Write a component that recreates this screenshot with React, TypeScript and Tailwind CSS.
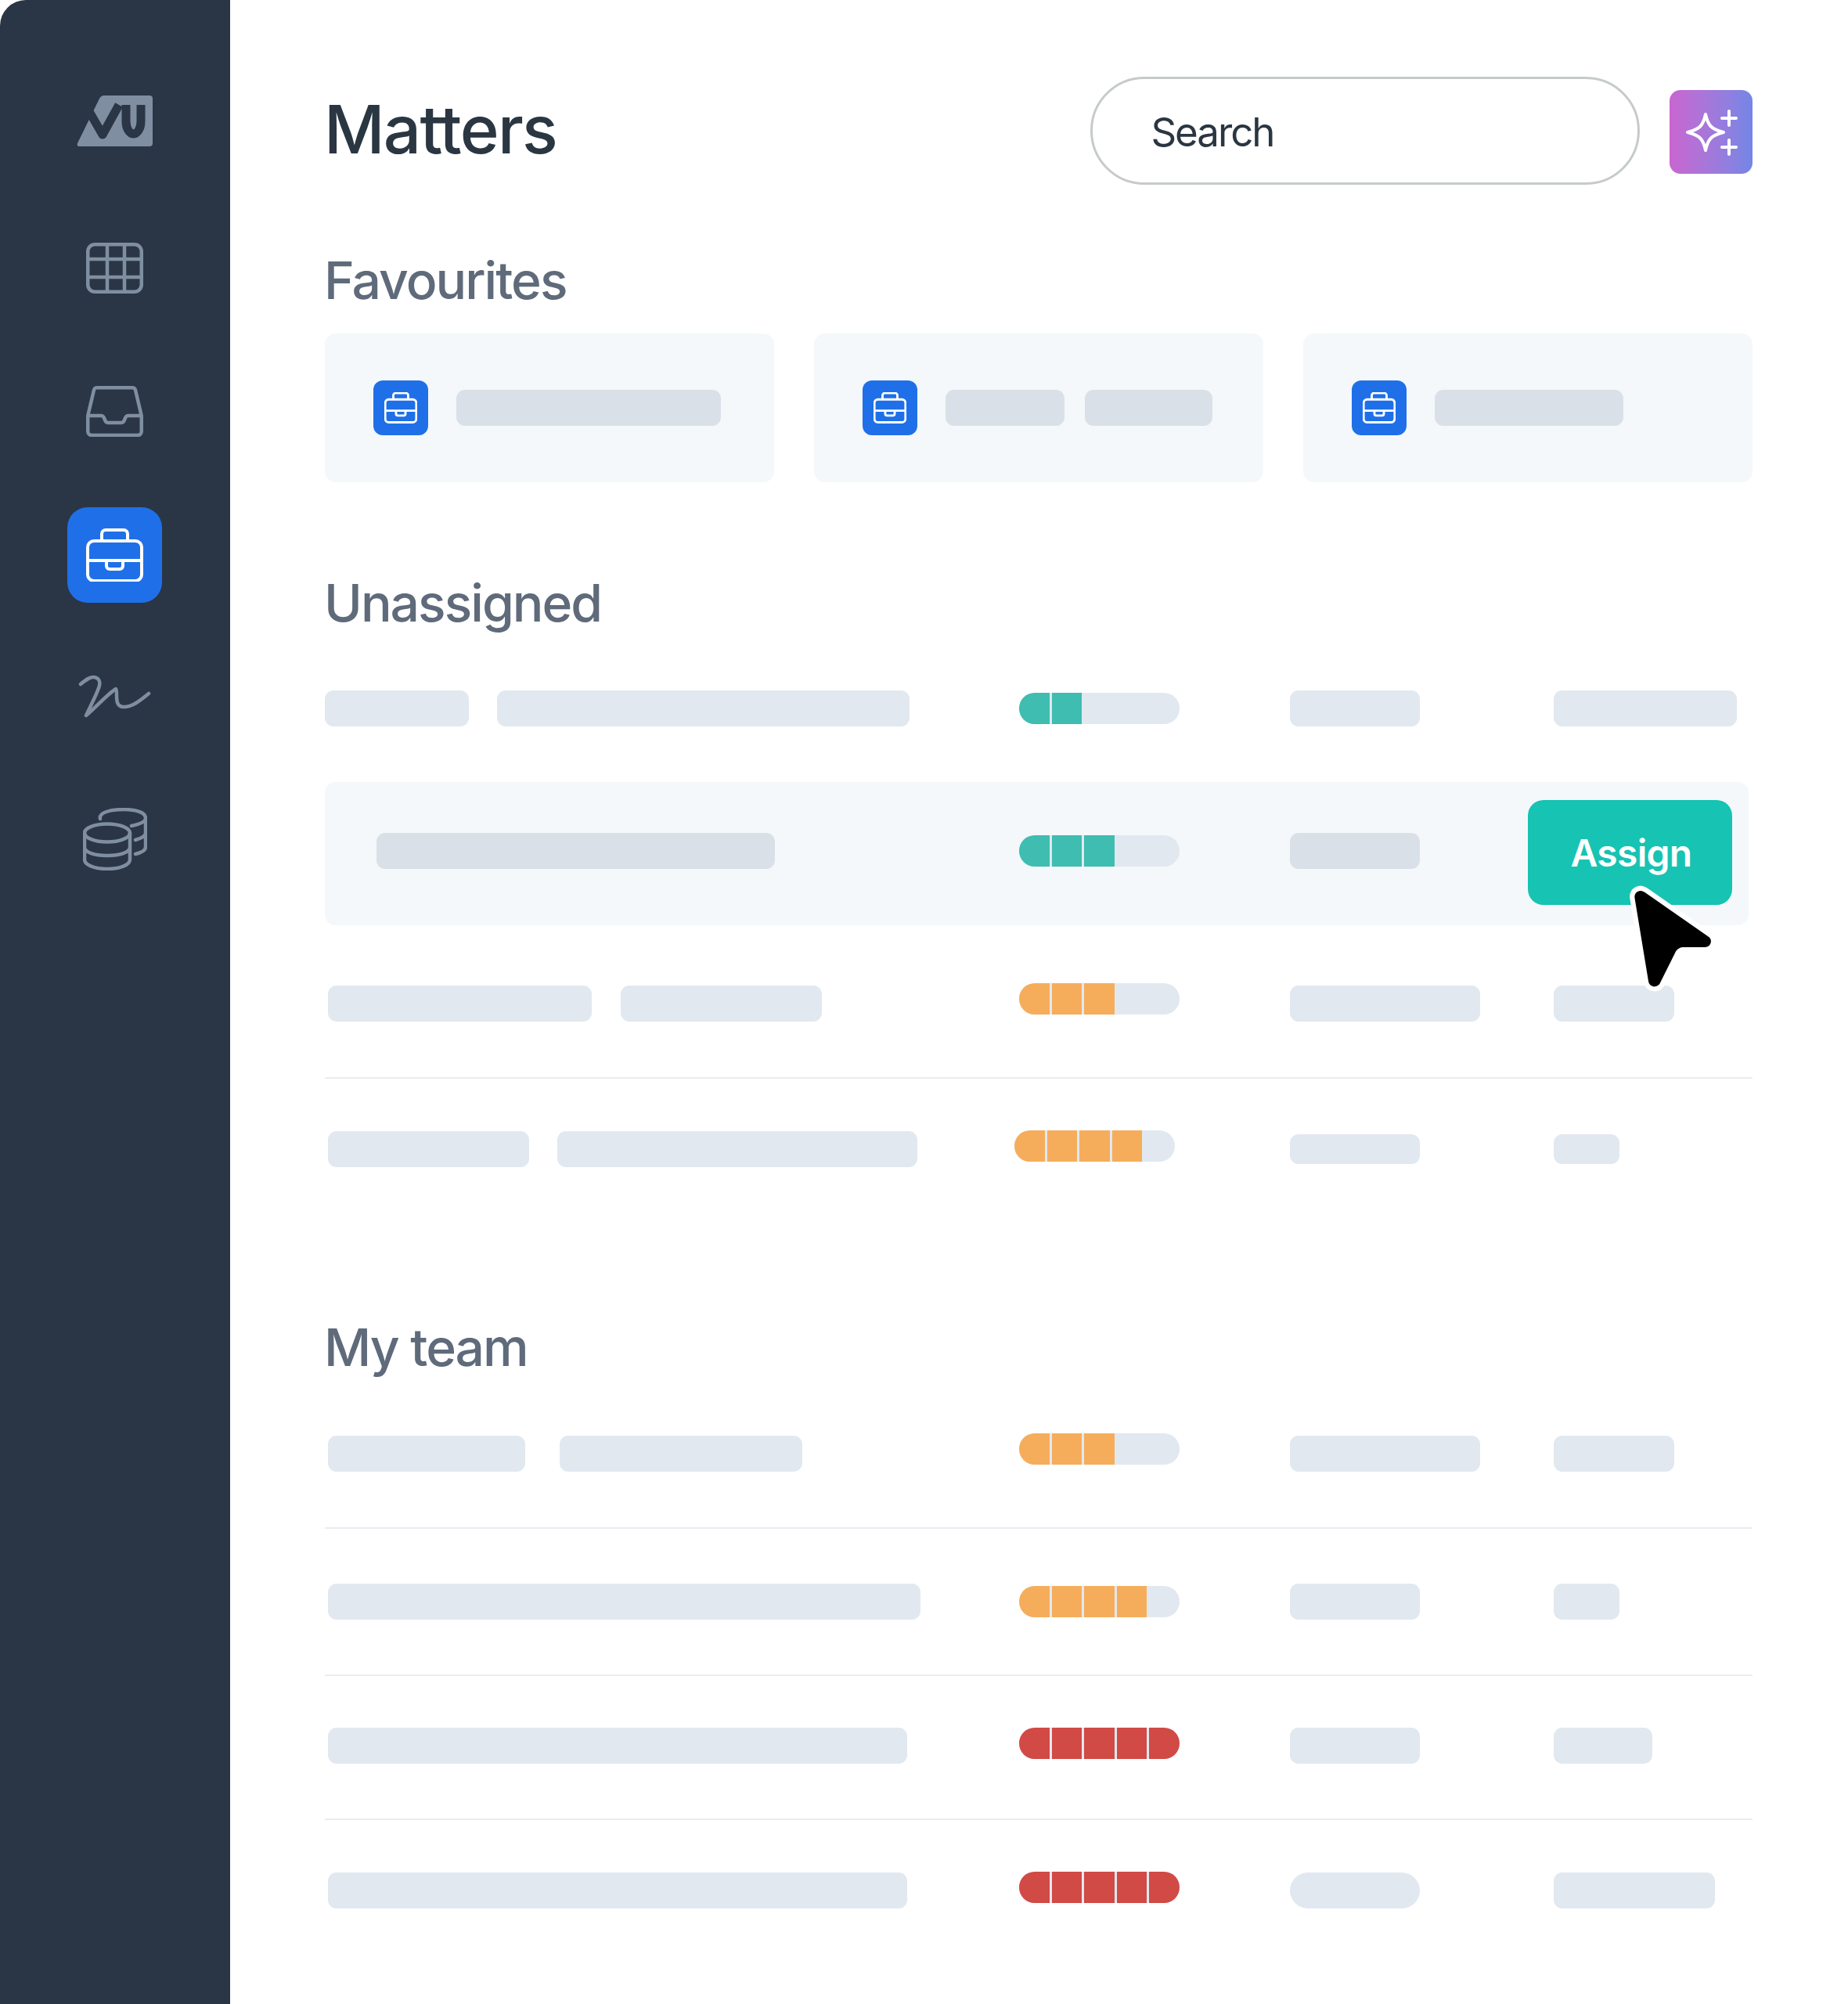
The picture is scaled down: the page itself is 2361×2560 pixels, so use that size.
const iconGray = '#7f8ea1';

function Bar({ w, h = 46, dark = false, round = 'rounded-[11px]' }: { w: number; h?: number; dark?: boolean; round?: string }) {
  return <div className={`${round} ${dark ? 'bg-[#d9e0e8]' : 'bg-[#e2e8f0]'}`} style={{ width: w, height: h }} />;
}

function BriefcaseIcon({ size, stroke = 4 }: { size: number; stroke?: number }) {
  return (
    <svg width={size} height={size * 0.945} viewBox="0 0 73 69" fill="none" stroke="currentColor" strokeWidth={stroke} strokeLinejoin="round">
      <rect x="2" y="16" width="69" height="51" rx="8" />
      <path d="M20 16V7a5 5 0 0 1 5-5h23a5 5 0 0 1 5 5v9" />
      <path d="M2 41h69" />
      <path d="M26 41v7a4 4 0 0 0 4 4h13a4 4 0 0 0 4-4v-7" />
    </svg>
  );
}

function Logo() {
  return (
    <svg width="98" height="65" viewBox="0 0 98 65" fill="none">
      <path d="M35 0H93a4 4 0 0 1 4 4V61a4 4 0 0 1-4 4H3c-2 0-3-2-2-4L29 4c1-2 3-4 6-4Z" fill={iconGray} />
      <path d="M14 17 33 50 54 12" stroke="#2a3645" strokeWidth="11" strokeLinejoin="round" />
      <path d="M63 12V33a9.500 16 0 0 0 19 0V12" stroke="#2a3645" strokeWidth="11" />
    </svg>
  );
}

function GridIcon() {
  return (
    <svg width="73" height="65" viewBox="0 0 73 65" fill="none" stroke={iconGray} strokeWidth="4.500">
      <rect x="2.250" y="2.250" width="68.500" height="60.500" rx="9" />
      <path d="M27 2v61M49 2v61M2 21h69M2 44h69" />
    </svg>
  );
}

function InboxIcon() {
  return (
    <svg width="73" height="65" viewBox="0 0 73 65" fill="none" stroke={iconGray} strokeWidth="4.500" strokeLinejoin="round">
      <path d="M14 2.250h45c2 0 3.500 1 4 3l7.750 32.750v20a5 5 0 0 1-5 5H7.250a5 5 0 0 1-5-5V38L10 5.250c.5-2 2-3 4-3Z" />
      <path d="M2.250 38H19c2 0 3 .8 3.800 2.500l1.700 4c.8 1.700 2 2.500 4 2.500h16c2 0 3.200-.8 4-2.500l1.700-4c.8-1.700 1.800-2.500 3.800-2.500h16.750" />
    </svg>
  );
}

function SignIcon() {
  return (
    <svg width="94" height="56" viewBox="0 0 94 56" fill="none" stroke={iconGray} strokeWidth="4.500" strokeLinecap="round" strokeLinejoin="round">
      <path d="M3 12C9 7 15 2 20 3c7 1 9 7 6 14C23 26 15 41 10 52 20 44 38 24 48 18c3 4-3 22 9 23 11 1 22-8 33-17" />
    </svg>
  );
}

function CoinsIcon() {
  return (
    <svg width="82" height="80" viewBox="0 0 82 80" fill="none" stroke={iconGray} strokeWidth="4.500" strokeLinecap="round">
      <ellipse cx="31" cy="32" rx="29" ry="11.500" />
      <path d="M2 32v34c0 7 13 12 29 12s29-5 29-12V32M2 50c0 7 13 11 29 11s29-4 29-11" />
      <path d="M22 14C20 6 35 2 52 2c16 0 28 4 28 11 0 5-8 8-18 10M80 13v37c0 4-5 7-13 9M80 32c0 4-6 7-13 9" />
    </svg>
  );
}

function SparkIcon() {
  return (
    <svg width="68" height="62" viewBox="0 0 68 62" fill="none" stroke="#fff" strokeWidth="4" strokeLinecap="round" strokeLinejoin="round">
      <path d="M27 8c3 14 7 19 23 23-16 4-20 9-23 23-3-14-7-19-23-23 16-4 20-9 23-23Z" />
      <path d="M57 4v18M48 13h18M57 41v18M48 50h18" />
    </svg>
  );
}

function Cursor() {
  return (
    <svg width="118" height="141" viewBox="0 0 114 136" className="absolute left-[2076px] top-[1127px]">
      <path d="M12 19c-.7-7 6-11 12-7l79 55c6 4 3 13-4 13H72c-4 0-7 2-9 5L43 125c-4 6-13 4-14-3L12 19Z" fill="#000" stroke="#fff" strokeWidth="12" strokeLinejoin="round" paintOrder="stroke" />
    </svg>
  );
}

function Pill({ n, tone, shift = false }: { n: number; tone: 'teal' | 'orange' | 'red'; shift?: boolean }) {
  const fill = tone === 'teal' ? 'bg-[#3ebdb0]' : tone === 'orange' ? 'bg-[#f6ad5b]' : 'bg-[#d14a45]';
  return (
    <div className={`flex h-[40px] w-[205px] gap-[3px] overflow-hidden rounded-full bg-[#e2e8f0] ${shift ? '-ml-[6px]' : ''}`}>
      {Array.from({ length: n }).map((_, i) => (
        <div key={i} className={`h-full w-[38.600px] ${fill}`} />
      ))}
    </div>
  );
}

type RowProps = {
  bars: number[];
  gap?: number;
  indent?: number;
  n: number;
  tone: 'teal' | 'orange' | 'red';
  shift?: boolean;
  raise?: number;
  c4?: number;
  c4h?: number;
  c5?: number;
  c5h?: number;
  c4round?: string;
};

function Row({ bars, gap = 36, indent = 4, n, tone, shift, raise = 0, c4 = 166, c4h = 46, c5 = 84, c5h = 46, c4round }: RowProps) {
  return (
    <div className="grid h-full grid-cols-[887px_346px_337px_1fr] items-center">
      <div className="flex" style={{ paddingLeft: indent, gap }}>
        {bars.map((w, i) => <Bar key={i} w={w} />)}
      </div>
      <div style={{ marginTop: -raise }}>
        <Pill n={n} tone={tone} shift={shift} />
      </div>
      <Bar w={c4} h={c4h} round={c4round} />
      <Bar w={c5} h={c5h} />
    </div>
  );
}

function Divider() {
  return <div className="h-[2px] bg-[#e9edf1]" />;
}

function Title({ children }: { children: string }) {
  return <h2 className="-ml-[1px] h-[60px] text-[66px] font-medium leading-[59px] tracking-[-0.03em] text-[#5f6b7a]">{children}</h2>;
}

function FavCard({ bars }: { bars: number[] }) {
  return (
    <div className="flex h-[190px] w-[574px] items-center gap-[36px] rounded-[14px] bg-[#f4f8fb] pl-[62px]">
      <div className="flex h-[70px] w-[70px] items-center justify-center rounded-[12px] bg-[#1f70e8] text-white">
        <BriefcaseIcon size={42} stroke={5} />
      </div>
      <div className="flex gap-[26px]">
        {bars.map((w, i) => <Bar key={i} w={w} dark />)}
      </div>
    </div>
  );
}

export default function App() {
  return (
    <div className="relative flex h-[2560px] w-[2361px] bg-white font-['Inter',sans-serif]">
      <aside className="flex w-[294px] shrink-0 flex-col items-center rounded-tl-[33px] bg-[#2a3645] pr-[1px]">
        <div className="mt-[122px] h-[65px]"><Logo /></div>
        <div className="mt-[123px] h-[65px]"><GridIcon /></div>
        <div className="mt-[118px] h-[65px]"><InboxIcon /></div>
        <div className="mt-[90px] flex h-[122px] w-[121px] items-center justify-center rounded-[26px] bg-[#1f70e8] text-white">
          <BriefcaseIcon size={73} />
        </div>
        <div className="mt-[92px] h-[56px]"><SignIcon /></div>
        <div className="mt-[114px]"><CoinsIcon /></div>
      </aside>

      <main className="relative ml-[121px] w-[1824px] pt-[98px]">
        <header className="flex h-[138px] items-center">
          <h1 className="-mt-[4px] -ml-[1px] w-[980px] text-[85px] font-medium leading-none tracking-[-0.02em] text-[#2a3642]">Matters</h1>
          <div className="flex h-[138px] w-[702px] items-center rounded-full border-[3px] border-[#c6cacb] pl-[74px] text-[51px] tracking-[-0.04em] text-[#2a3642]">
            <span className="mt-[4px]">Search</span>
          </div>
          <div className="ml-[38px] mt-[3px] flex h-[107px] w-[106px] items-center justify-center rounded-[14px] bg-gradient-to-r from-[#c965d0] to-[#7286e6]">
            <SparkIcon />
          </div>
        </header>

        <section className="mt-[93px]">
          <Title>Favourites</Title>
          <div className="mt-[37px] flex gap-[51px]">
            <FavCard bars={[338]} />
            <FavCard bars={[152, 163]} />
            <FavCard bars={[241]} />
          </div>
        </section>

        <section className="mt-[125px]">
          <Title>Unassigned</Title>
          <div className="mt-[55px] h-[98px]">
            <Row bars={[184, 527]} indent={0} n={2} tone="teal" c5={234} />
          </div>
          <div className="relative mt-[45px] h-[183px] w-[1819px] rounded-[14px] bg-[#f4f8fb]">
            <div className="grid h-full grid-cols-[887px_346px_1fr] items-center pb-[7px]">
              <div className="pl-[66px]"><Bar w={509} dark /></div>
              <Pill n={3} tone="teal" />
              <Bar w={166} dark />
            </div>
            <button className="absolute left-[1537px] top-[23px] flex h-[134px] w-[261px] items-center justify-center rounded-[20px] bg-[#17c3b2] pl-[3px] pt-[2px] text-[48px] font-semibold tracking-[-0.015em] text-white">Assign</button>
          </div>
          <div className="h-[194px] pt-[6px]">
            <Row bars={[337, 257]} gap={37} n={3} tone="orange" raise={12} c4={243} c5={154} />
          </div>
          <Divider />
          <div className="h-[180px]">
            <Row bars={[257, 460]} n={4} tone="orange" shift raise={8} c4h={38} c5h={38} />
          </div>
        </section>

        <section className="mt-[134px]">
          <Title>My team</Title>
          <div className="mt-[10px] h-[189px]">
            <Row bars={[252, 310]} gap={44} n={3} tone="orange" raise={12} c4={243} c5={154} />
          </div>
          <Divider />
          <div className="h-[186px]">
            <Row bars={[757]} n={4} tone="orange" />
          </div>
          <Divider />
          <div className="h-[182px] pb-[4px]">
            <Row bars={[740]} n={5} tone="red" raise={6} c5={126} />
          </div>
          <Divider />
          <div className="h-[180px]">
            <Row bars={[740]} n={5} tone="red" raise={8} c5={206} c4round="rounded-[23px]" />
          </div>
        </section>
      </main>
      <Cursor />
    </div>
  );
}
